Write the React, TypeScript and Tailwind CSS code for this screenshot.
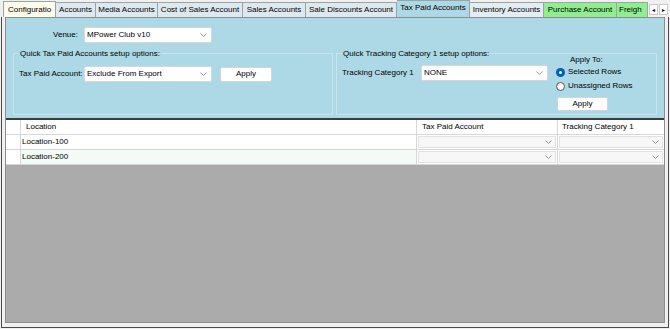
import type { ReactElement } from "react";

interface TabDef {
  label: string;
  className: string;
}

const TABS: TabDef[] = [
  { label: "Configuratio", className: "w-[53px] h-[16px] bg-[#fdfbea] justify-start pl-[4px] border-l" },
  { label: "Accounts", className: "w-[40px] h-[15px] bg-[#dde9ef] justify-center" },
  { label: "Media Accounts", className: "w-[62px] h-[15px] bg-[#dde9ef] justify-center" },
  { label: "Cost of Sales Account", className: "w-[85px] h-[15px] bg-[#dde9ef] justify-center" },
  { label: "Sales Accounts", className: "w-[63px] h-[15px] bg-[#dde9ef] justify-center" },
  { label: "Sale Discounts Account", className: "w-[91px] h-[15px] bg-[#dde9ef] justify-center" },
  { label: "Tax Paid Accounts", className: "w-[73px] h-[17px] bg-[#add8e6] justify-center pb-[2px]" },
  { label: "Inventory Accounts", className: "w-[74px] h-[15px] bg-[#e3edf2] justify-center" },
  { label: "Purchase Account", className: "w-[73px] h-[15px] bg-[#90ee90] justify-center" },
  { label: "Freigh", className: "w-[31px] h-[15px] bg-[#90ee90] justify-start pl-[2px]" },
];

function Chevron(): ReactElement {
  return (
    <svg width="7" height="4" viewBox="0 0 7 4" className="shrink-0">
      <polyline points="0.5,0.5 3.5,3.5 6.5,0.5" fill="none" stroke="#8a8a8a" strokeWidth="0.9" />
    </svg>
  );
}

function Dropdown({ value, className }: { value: string; className: string }): ReactElement {
  return (
    <div
      className={`flex items-center justify-between bg-white border border-[#d4d8da] rounded-[2px] pl-[2px] pr-[4px] ${className}`}
    >
      <span className="whitespace-nowrap">{value}</span>
      <Chevron />
    </div>
  );
}

function Button({ label, className }: { label: string; className: string }): ReactElement {
  return (
    <button
      type="button"
      className={`flex items-center justify-center bg-white border border-[#cfd6d9] rounded-[2px] text-black ${className}`}
    >
      {label}
    </button>
  );
}

function GroupBox({
  title,
  className,
  children,
}: {
  title: string;
  className: string;
  children: React.ReactNode;
}): ReactElement {
  return (
    <div className={`relative border border-[#cbe4ec] ${className}`}>
      <span className="absolute top-[-6px] left-[5px] bg-[#add8e6] px-[1px] leading-[11px] whitespace-nowrap">
        {title}
      </span>
      {children}
    </div>
  );
}

function Radio({ checked, label }: { checked: boolean; label: string }): ReactElement {
  return (
    <div className="flex items-center h-[14px] gap-[3px]">
      {checked ? (
        <span className="flex items-center justify-center w-[9px] h-[9px] rounded-full bg-[#005fb8]">
          <span className="w-[3px] h-[3px] rounded-full bg-white" />
        </span>
      ) : (
        <span className="w-[9px] h-[9px] rounded-full bg-white border border-[#555]" />
      )}
      <span className="whitespace-nowrap">{label}</span>
    </div>
  );
}

function CellDropdown(): ReactElement {
  return (
    <div className="flex items-center justify-end h-full bg-[#f7f7f7] border border-[#e2e2e2] pr-[3px]">
      <Chevron />
    </div>
  );
}

const ROWS = ["Location-100", "Location-200"];

export default function App(): ReactElement {
  return (
    <div className="w-[670px] h-[329px] flex flex-col bg-[#f0f0f0] px-[1px] pb-[1px] overflow-hidden font-['Liberation_Sans',Arial,sans-serif] text-[8px] text-black">
      {/* tab strip */}
      <div className="flex items-end h-[17px] pl-[2px] shrink-0">
        {TABS.map((t) => (
          <div
            key={t.label}
            className={`flex items-center shrink-0 overflow-hidden whitespace-nowrap border-t border-r border-[#9aa3a8] ${t.className}`}
          >
            {t.label}
          </div>
        ))}
        <div className="flex items-center gap-[1px] h-[15px] pl-[1px]">
          <span className="flex items-center justify-center w-[9px] h-[11px] bg-white border border-[#c8c8c8] text-[6px] leading-none">
            ◂
          </span>
          <span className="flex items-center justify-center w-[9px] h-[11px] bg-white border border-[#c8c8c8] text-[6px] leading-none">
            ▸
          </span>
        </div>
      </div>

      {/* frame */}
      <div className="flex-1 flex flex-col border-l border-r border-b border-[#4a4a4a] px-[3px] pb-[4px]">
        <div className="flex-1 flex flex-col border border-[#8a8f92] bg-[#ababab]">
          {/* settings panel */}
          <div className="h-[100px] shrink-0 bg-[#add8e6] pt-[9px]">
            <div className="flex items-center">
              <span className="w-[72px] text-right">Venue:</span>
              <Dropdown value="MPower Club v10" className="ml-[6px] w-[128px] h-[16px]" />
            </div>

            <div className="flex gap-[3px] mt-[10px] pl-[7px]">
              <GroupBox title="Quick Tax Paid Accounts setup options:" className="w-[320px] h-[62px]">
                <div className="flex items-center pt-[12px] pl-[5px]">
                  <span className="w-[65px] whitespace-nowrap">Tax Paid Account:</span>
                  <Dropdown value="Exclude From Export" className="w-[128px] h-[16px]" />
                  <Button label="Apply" className="ml-[8px] w-[52px] h-[15px]" />
                </div>
              </GroupBox>

              <GroupBox title="Quick Tracking Category 1 setup options:" className="w-[321px] h-[62px] flex items-start">
                <div className="flex items-center pt-[11px] pl-[5px]">
                  <span className="w-[79px] whitespace-nowrap">Tracking Category 1</span>
                  <Dropdown value="NONE" className="w-[127px] h-[16px]" />
                </div>
                <div className="flex flex-col ml-[8px] pt-[1px]">
                  <span className="pl-[14px] leading-[10px] h-[10px]">Apply To:</span>
                  <Radio checked label="Selected Rows" />
                  <Radio checked={false} label="Unassigned Rows" />
                  <Button label="Apply" className="mt-[4px] ml-[1px] w-[51px] h-[14px]" />
                </div>
              </GroupBox>
            </div>
          </div>

          {/* grid */}
          <div className="flex-1 flex flex-col border-t-2 border-[#3c3c3c]">
            <div className="flex h-[15px] bg-white border-b border-[#d6d6d6]">
              <div className="w-[15px] border-r border-[#d6d6d6]" />
              <div className="w-[396px] flex items-center pl-[5px] border-r border-[#d6d6d6]">Location</div>
              <div className="w-[141px] flex items-center pl-[5px] border-r border-[#d6d6d6]">Tax Paid Account</div>
              <div className="w-[106px] flex items-center pl-[4px]">Tracking Category 1</div>
            </div>
            {ROWS.map((r, i) => (
              <div
                key={r}
                className={`flex h-[15px] border-b border-[#d6d6d6] ${i === 1 ? "bg-[#f2fbf6]" : "bg-white"}`}
              >
                <div className="w-[15px] bg-white border-r border-[#d6d6d6]" />
                <div className="w-[396px] flex items-center pl-[1px] border-r border-[#d6d6d6]">{r}</div>
                <div className="w-[141px] bg-white border-r border-[#d6d6d6] p-[1px]">
                  <CellDropdown />
                </div>
                <div className="w-[106px] bg-white p-[1px]">
                  <CellDropdown />
                </div>
              </div>
            ))}
          </div>
        </div>
      </div>
    </div>
  );
}
